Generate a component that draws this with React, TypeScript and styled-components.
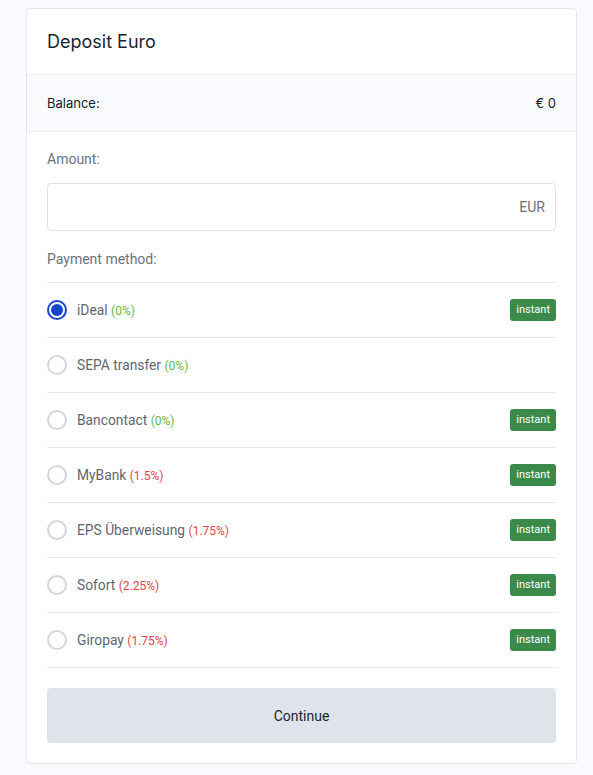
import React, { useState } from "react";
import styled, { createGlobalStyle } from "styled-components";

const Global = createGlobalStyle`
  html, body { margin: 0; padding: 0; background: #f8fafd; }
  body { font-family: Roboto, "Liberation Sans", Arial, sans-serif; }
  * { box-sizing: border-box; }
`;

const Card = styled.div`
  width: 551px;
  margin: 8px 0 12px 26px;
  background: #fff;
  border: 1px solid #e3e6ea;
  border-radius: 4px;
`;

const Header = styled.div`
  height: 66px;
  display: flex;
  align-items: center;
  padding: 0 20px;
  border-bottom: 1px solid #eceef2;
  font-family: Inter, "Noto Sans", sans-serif;
  font-size: 18px;
  color: #1b2433;
`;

const BalanceRow = styled.div`
  height: 57px;
  display: flex;
  align-items: center;
  justify-content: space-between;
  padding: 0 20px;
  background: #f8fafd;
  border-bottom: 1px solid #eceef2;
  font-family: Inter, "Noto Sans", sans-serif;
  font-size: 13px;
  color: #161c26;
`;

const Body = styled.div`
  padding: 18px 20px 20px;
`;

const Label = styled.div`
  font-size: 14px;
  color: #6b7280;
  line-height: 18px;
`;

const InputWrap = styled.div`
  margin: 15px 0 19px;
  height: 48px;
  border: 1px solid #dfe2e6;
  border-radius: 4px;
  display: flex;
  align-items: center;
  padding: 0 10px 0 12px;
`;

const Input = styled.input`
  flex: 1;
  border: none;
  outline: none;
  font-size: 14px;
  font-family: inherit;
  background: transparent;
`;

const Suffix = styled.span`
  font-size: 14px;
  color: #6c717a;
`;

const List = styled.div`
  margin-top: 14px;
  border-top: 1px solid #e6e8eb;
`;

const Row = styled.label`
  height: 55px;
  display: flex;
  align-items: center;
  border-bottom: 1px solid #e6e8eb;
  cursor: pointer;
`;

const Radio = styled.span<{ $checked: boolean }>`
  width: 20px;
  height: 20px;
  border-radius: 50%;
  border: 2px solid ${(p) => (p.$checked ? "#1546c9" : "#d3d5d8")};
  display: flex;
  align-items: center;
  justify-content: center;
  margin-right: 10px;
  flex-shrink: 0;
  &::after {
    content: "";
    width: 12px;
    height: 12px;
    border-radius: 50%;
    background: ${(p) => (p.$checked ? "#1546c9" : "transparent")};
  }
`;

const Name = styled.span`
  font-size: 13.8px;
  color: #5f6673;
  flex: 1;
`;

const Fee = styled.span<{ $free: boolean }>`
  font-size: 12px;
  color: ${(p) => (p.$free ? "#5fba3d" : "#e0454b")};
`;

const Badge = styled.span`
  background: #3b8a4a;
  color: #fff;
  font-size: 11px;
  border-radius: 3px;
  padding: 0 6px;
  height: 22px;
  line-height: 22px;
`;

const Button = styled.button`
  margin-top: 20px;
  width: 100%;
  height: 55px;
  border: none;
  border-radius: 4px;
  background: #dfe4eb;
  font-family: Roboto, sans-serif;
  font-size: 14px;
  color: #1b2433;
  cursor: pointer;
`;

const methods = [
  { name: "iDeal", fee: "0%", instant: true },
  { name: "SEPA transfer", fee: "0%", instant: false },
  { name: "Bancontact", fee: "0%", instant: true },
  { name: "MyBank", fee: "1.5%", instant: true },
  { name: "EPS Überweisung", fee: "1.75%", instant: true },
  { name: "Sofort", fee: "2.25%", instant: true },
  { name: "Giropay", fee: "1.75%", instant: true },
];

export default function App() {
  const [sel, setSel] = useState(0);
  return (
    <>
      <Global />
      <Card>
        <Header>Deposit Euro</Header>
        <BalanceRow>
          <span>Balance:</span>
          <span>€ 0</span>
        </BalanceRow>
        <Body>
          <Label>Amount:</Label>
          <InputWrap>
            <Input />
            <Suffix>EUR</Suffix>
          </InputWrap>
          <Label>Payment method:</Label>
          <List>
            {methods.map((m, i) => (
              <Row key={m.name} onClick={() => setSel(i)}>
                <Radio $checked={sel === i} />
                <Name>
                  {m.name} <Fee $free={m.fee === "0%"}>({m.fee})</Fee>
                </Name>
                {m.instant && <Badge>instant</Badge>}
              </Row>
            ))}
          </List>
          <Button>Continue</Button>
        </Body>
      </Card>
    </>
  );
}
